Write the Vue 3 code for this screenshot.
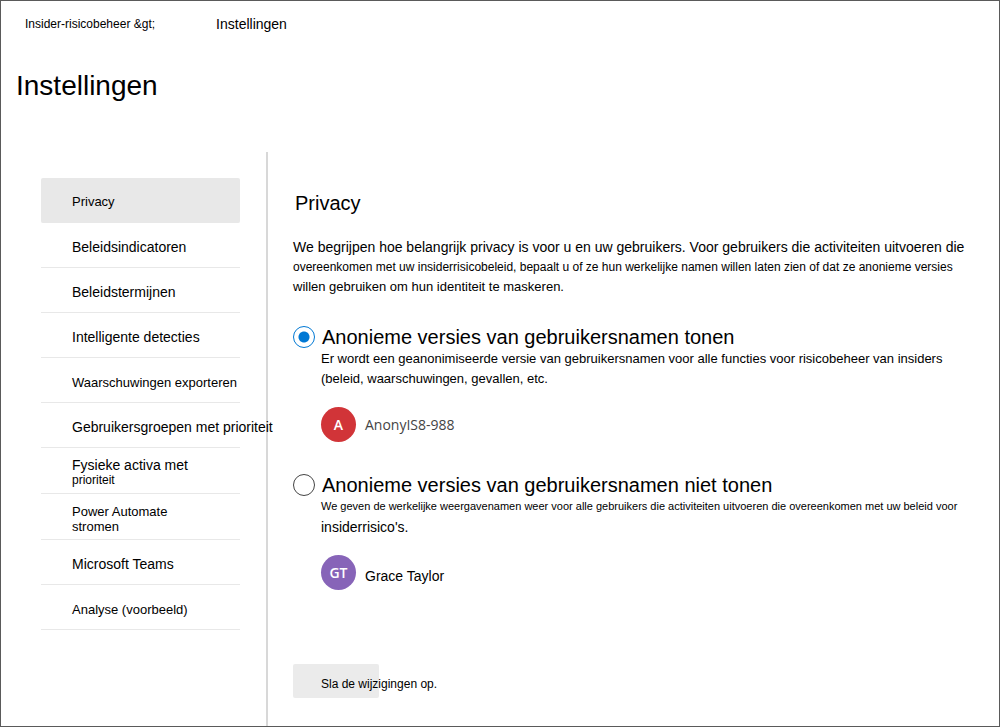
<script setup>
import { ref } from 'vue'

const current = ref('privacy')
const choice = ref('anon')

const sections = [
  { id: 'privacy', lines: [{ text: 'Privacy', size: 't13' }] },
  { id: 'indicators', lines: [{ text: 'Beleidsindicatoren', size: 't14' }] },
  { id: 'timeframes', lines: [{ text: 'Beleidstermijnen', size: 't14' }] },
  { id: 'detections', lines: [{ text: 'Intelligente detecties', size: 't14' }] },
  { id: 'export', lines: [{ text: 'Waarschuwingen exporteren', size: 't13' }] },
  { id: 'groups', lines: [{ text: 'Gebruikersgroepen met prioriteit', size: 't14' }] },
  { id: 'assets', lines: [{ text: 'Fysieke activa met', size: 't14' }, { text: 'prioriteit', size: 't12' }] },
  { id: 'automate', lines: [{ text: 'Power Automate', size: 't13' }, { text: 'stromen', size: 't13' }] },
  { id: 'teams', lines: [{ text: 'Microsoft Teams', size: 't14' }] },
  { id: 'analytics', lines: [{ text: 'Analyse (voorbeeld)', size: 't13' }] }
]

const options = [
  {
    id: 'anon',
    title: 'Anonieme versies van gebruikersnamen tonen',
    lines: [
      { text: 'Er wordt een geanonimiseerde versie van gebruikersnamen voor alle functies voor risicobeheer van insiders', size: 't13' },
      { text: '(beleid, waarschuwingen, gevallen, etc.', size: 't13' }
    ],
    initials: 'A',
    name: 'AnonyIS8-988'
  },
  {
    id: 'real',
    title: 'Anonieme versies van gebruikersnamen niet tonen',
    lines: [
      { text: 'We geven de werkelijke weergavenamen weer voor alle gebruikers die activiteiten uitvoeren die overeenkomen met uw beleid voor', size: 't11' },
      { text: "insiderrisico's.", size: 't14' }
    ],
    initials: 'GT',
    name: 'Grace Taylor'
  }
]
</script>

<template>
  <div class="page">
    <nav class="crumbs" aria-label="Kruimelpad">
      <a href="#" class="t12">Insider-risicobeheer &amp;gt;</a>
      <span class="t14">Instellingen</span>
    </nav>
    <h1>Instellingen</h1>

    <div class="body">
      <nav class="side" aria-label="Secties">
        <a
          v-for="s in sections"
          :key="s.id"
          href="#"
          class="item"
          :class="{ active: s.id === current }"
          @click.prevent="current = s.id"
        >
          <span v-for="l in s.lines" :key="l.text" :class="l.size">{{ l.text }}</span>
        </a>
      </nav>

      <main>
        <h2>Privacy</h2>
        <p class="intro">
          <span class="t14">We begrijpen hoe belangrijk privacy is voor u en uw gebruikers. Voor gebruikers die activiteiten uitvoeren die</span>
          <span class="t12">overeenkomen met uw insiderrisicobeleid, bepaalt u of ze hun werkelijke namen willen laten zien of dat ze anonieme versies</span>
          <span class="t13">willen gebruiken om hun identiteit te maskeren.</span>
        </p>

        <section v-for="o in options" :key="o.id" class="option" :class="o.id">
          <input :id="o.id" v-model="choice" type="radio" name="privacy" :value="o.id" />
          <div class="detail">
            <label :for="o.id">{{ o.title }}</label>
            <p>
              <span v-for="l in o.lines" :key="l.text" :class="l.size">{{ l.text }}</span>
            </p>
            <div class="persona">
              <span class="avatar">{{ o.initials }}</span>
              <span class="name">{{ o.name }}</span>
            </div>
          </div>
        </section>

        <button type="button" class="save">Sla de wijzigingen op.</button>
      </main>
    </div>
  </div>
</template>

<style>
body {
  margin: 0;
  background: #fff;
}
</style>

<style scoped>
.page {
  box-sizing: border-box;
  min-height: 100vh;
  display: flex;
  flex-direction: column;
  border: 1px solid #5a5a5a;
  color: #000;
  font-family: "Liberation Sans", Arial, sans-serif;
  overflow: hidden;
}

.t11 { font-size: 11px; }
.t12 { font-size: 12px; }
.t13 { font-size: 13px; }
.t14 { font-size: 14px; }

a {
  color: inherit;
  text-decoration: none;
}

.crumbs {
  display: flex;
  align-items: center;
  gap: 61px;
  padding: 15px 24px 0;
  line-height: 16px;
}

h1 {
  margin: 36px 0 0 15px;
  font-size: 28px;
  line-height: 36px;
  font-weight: 400;
}

.body {
  flex: 1;
  display: grid;
  grid-template-columns: 265px minmax(0, 1fr);
  margin-top: 48px;
}

.side {
  position: relative;
  z-index: 1;
  padding: 26px 26px 0 40px;
}

.item {
  box-sizing: border-box;
  min-height: 45px;
  display: flex;
  flex-direction: column;
  justify-content: center;
  padding: 10px 0 5px 31px;
  border-bottom: 1px solid #e8e8e8;
  line-height: 15px;
  white-space: nowrap;
}

.item.active {
  padding: 9px 0 6px 31px;
  background: #e8e8e8;
  border-radius: 2px;
}

main {
  border-left: 2px solid #d8d8d8;
  padding: 38px 24px 24px 25px;
}

h2 {
  margin: 0 0 21px 2px;
  font-size: 20px;
  line-height: 26px;
  font-weight: 400;
}

p {
  margin: 0;
  white-space: nowrap;
  line-height: 20px;
}

p span {
  display: block;
}

.intro {
  margin-bottom: 29px;
}

.option {
  display: flex;
  gap: 6px;
  margin-bottom: 32px;
}

.option input {
  appearance: none;
  box-sizing: border-box;
  flex: none;
  width: 22px;
  height: 22px;
  margin: 0;
  border: 1px solid #444;
  border-radius: 50%;
  background: #fff;
}

.option input:checked {
  border-color: #0078d4;
  background: radial-gradient(circle, #0078d4 5px, #fff 6px);
}

.option label {
  display: block;
  padding-left: 1px;
  font-size: 20px;
  line-height: 23px;
  white-space: nowrap;
}

.option p {
  line-height: 19px;
}

.option p span + span {
  line-height: 22px;
}

.persona {
  display: flex;
  align-items: center;
  gap: 9px;
  margin-top: 17px;
}

.avatar {
  width: 35px;
  height: 35px;
  border-radius: 50%;
  background: #d13438;
  color: #fff;
  font: 600 14px/35px "Open Sans", "Noto Sans", sans-serif;
  text-align: center;
}

.name {
  padding-top: 6px;
  font-size: 14px;
  line-height: 20px;
}

.anon .name {
  padding-top: 0;
  color: #444;
  font-family: "Open Sans", "Noto Sans", sans-serif;
}

.real .avatar {
  background: #8764b8;
}

.save {
  display: block;
  width: 86px;
  height: 34px;
  margin-top: 74px;
  padding: 5px 0 0 28px;
  border: 0;
  border-radius: 2px;
  background: #ebebeb;
  color: #000;
  font: 12px/16px "Liberation Sans", Arial, sans-serif;
  text-align: left;
  white-space: nowrap;
}
</style>
